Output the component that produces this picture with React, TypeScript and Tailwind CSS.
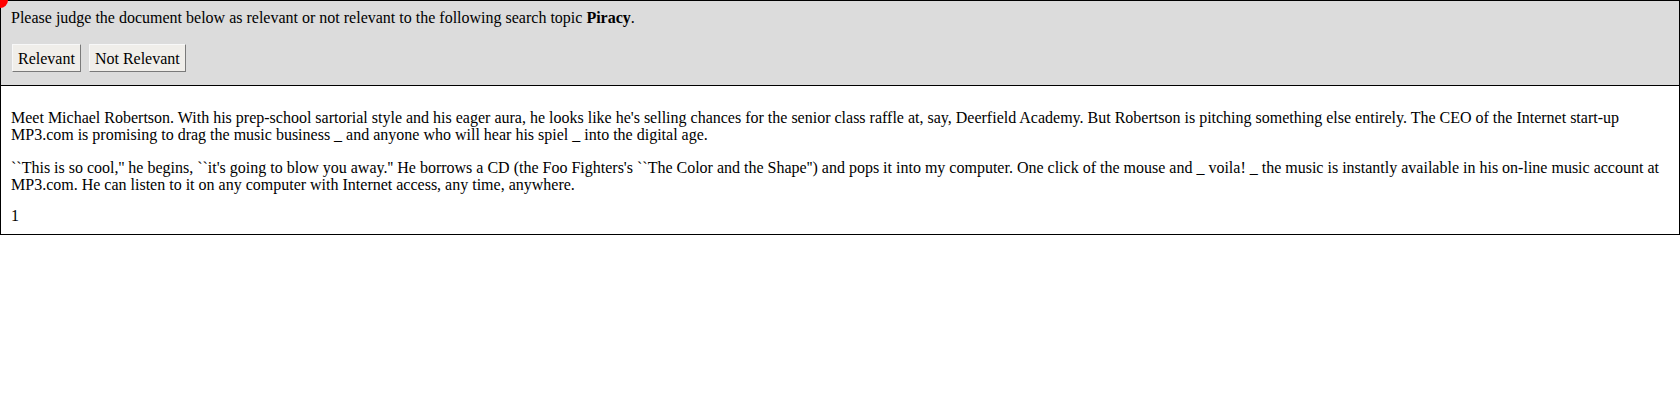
import React from "react";

export default function App() {
  return (
    <div className="relative bg-white text-black font-['Liberation_Serif','Times_New_Roman',serif] text-[16px] leading-[17px]">
      <div className="bg-[#dcdcdc] border border-black pl-[10px] pr-[10px] pt-[8px] pb-[13px]">
        <div>
          Please judge the document below as relevant or not relevant to the following search topic{" "}
          <b>Piracy</b>.
        </div>
        <div className="mt-[18px] ml-[1px] flex gap-[8px]">
          <button className="h-[28px] px-[5px] bg-[#f0eeea] border border-t-[#f8f8f8] border-l-[#f8f8f8] border-r-[#7a7a7a] border-b-[#7a7a7a] text-[16px] leading-[17px] text-black">
            Relevant
          </button>
          <button className="h-[28px] px-[5px] bg-[#f0eeea] border border-t-[#f8f8f8] border-l-[#f8f8f8] border-r-[#7a7a7a] border-b-[#7a7a7a] text-[16px] leading-[17px] text-black">
            Not Relevant
          </button>
        </div>
      </div>
      <div className="border border-t-0 border-black px-[10px] pt-[7px] pb-[10px]">
        <p className="mt-[16px]">
          Meet Michael Robertson. With his prep-school sartorial style and his eager aura, he looks like he's selling chances for the senior class raffle at, say, Deerfield Academy. But Robertson is pitching something else entirely. The CEO of the Internet start-up MP3.com is promising to drag the music business _ and anyone who will hear his spiel _ into the digital age.
        </p>
        <p className="mt-[16px]">
          ``This is so cool,'' he begins, ``it's going to blow you away.'' He borrows a CD (the Foo Fighters's ``The Color and the Shape'') and pops it into my computer. One click of the mouse and _ voila! _ the music is instantly available in his on-line music account at MP3.com. He can listen to it on any computer with Internet access, any time, anywhere.
        </p>
        <p className="mt-[14px]">1</p>
      </div>
      <div className="absolute left-[-8px] top-[-8px] w-[16px] h-[16px] rounded-full bg-[#ff0000]" />
    </div>
  );
}
